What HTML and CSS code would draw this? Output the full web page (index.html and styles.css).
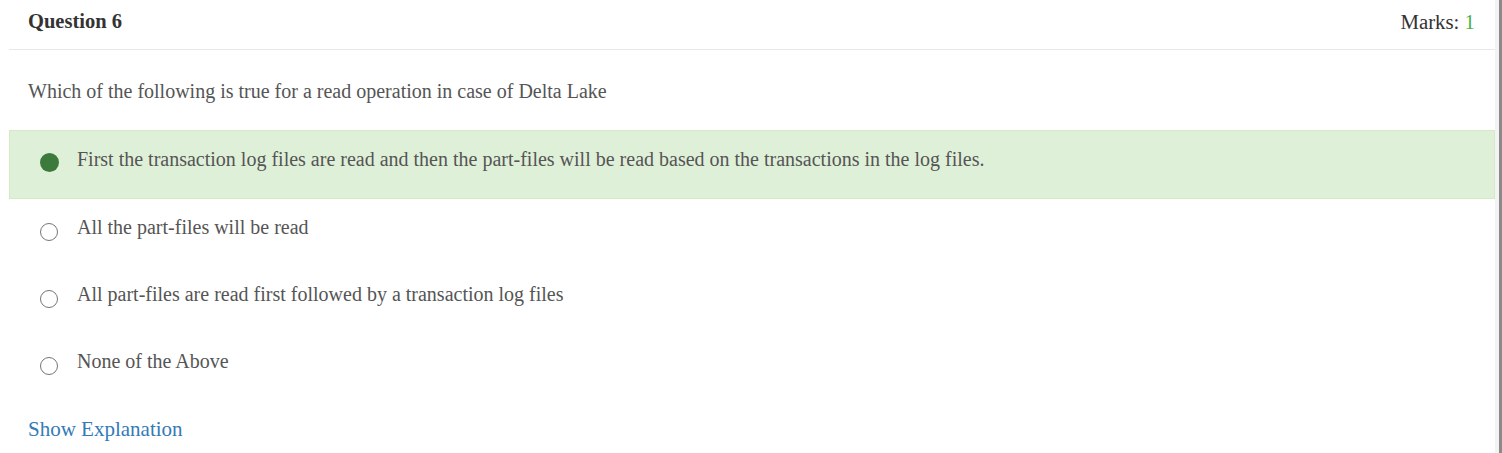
FILE: index.html
```html
<!DOCTYPE html>
<html>
<head>
<meta charset="utf-8">
<link rel="stylesheet" href="styles.css">
</head>
<body>
<div class="page">
  <div class="card">
    <div class="card-header">
      <div class="q-title">Question 6</div>
      <div class="marks">Marks: <span class="marks-num">1</span></div>
    </div>
    <div class="q-text">Which of the following is true for a read operation in case of Delta Lake</div>
    <ul class="options">
      <li class="option correct"><span class="radio checked"></span><span class="opt-text">First the transaction log files are read and then the part-files will be read based on the transactions in the log files.</span></li>
      <li class="option"><span class="radio"></span><span class="opt-text">All the part-files will be read</span></li>
      <li class="option"><span class="radio"></span><span class="opt-text">All part-files are read first followed by a transaction log files</span></li>
      <li class="option"><span class="radio"></span><span class="opt-text">None of the Above</span></li>
    </ul>
    <a class="explain" href="#">Show Explanation</a>
  </div>
  <div class="gutter"><div class="bar"></div></div>
</div>
</body>
</html>
```

FILE: styles.css
```css
html, body {
  margin: 0;
  padding: 0;
  background: #ffffff;
}
body {
  font-family: "Liberation Serif", "Times New Roman", serif;
  color: #555555;
}
.page {
  display: flex;
  height: 453px;
  overflow: hidden;
}
.card {
  margin-left: 9px;
  width: 1486px;
  display: flex;
  flex-direction: column;
}
.card-header {
  display: flex;
  justify-content: space-between;
  align-items: center;
  box-sizing: border-box;
  height: 50px;
  padding: 0 20px 6px 19px;
  border-bottom: 1px solid #e8e8e8;
}
.q-title {
  font-weight: bold;
  font-size: 20.5px;
  color: #333333;
}
.marks {
  font-size: 20.8px;
  color: #333333;
}
.marks-num {
  color: #4cae4c;
}
.q-text {
  font-size: 20px;
  padding: 29px 19px 0 19px;
  line-height: 24px;
}
.options {
  list-style: none;
  margin: 27px 0 0 0;
  padding: 0;
}
.option {
  display: flex;
  align-items: flex-start;
  height: 67px;
  box-sizing: border-box;
  padding: 18px 0 0 31px;
  font-size: 20px;
  line-height: 24px;
}
.option.correct {
  background: #dff0d8;
  border: 1px solid #d6e9c6;
  height: 69px;
  padding-top: 16px;
  padding-left: 30px;
  margin-bottom: -2px;
}
.radio {
  box-sizing: border-box;
  width: 18px;
  height: 18px;
  border: 1.6px solid #767676;
  border-radius: 50%;
  margin-top: 8px;
  margin-right: 19px;
  flex: none;
}
.radio.checked {
  width: 19px;
  height: 19px;
  border: none;
  background: #3c7a3c;
  margin-top: 6px;
  margin-right: 18px;
}
.opt-text {
  color: #555555;
}
.explain {
  font-size: 21px;
  line-height: 24px;
  color: #337ab7;
  text-decoration: none;
  padding-left: 19px;
  margin-top: 19px;
}
.gutter {
  width: 7px;
  background: #f3f3f3;
  display: flex;
  justify-content: flex-end;
}
.bar {
  width: 3px;
  background: #8a8a8a;
}
```
